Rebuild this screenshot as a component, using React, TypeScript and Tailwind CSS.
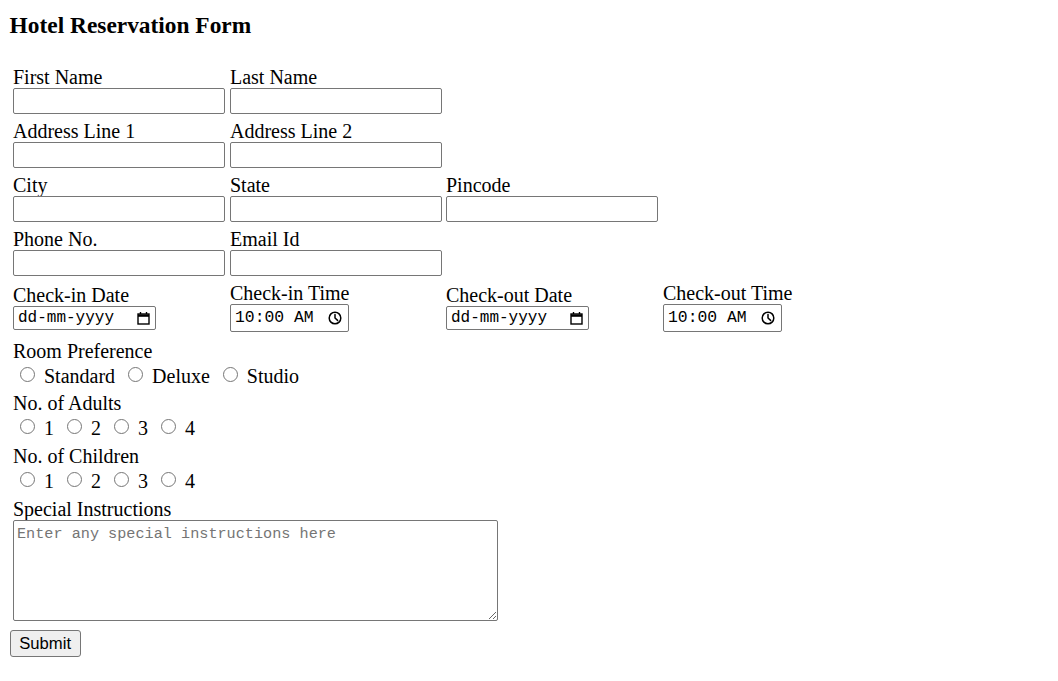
import { useState } from "react";

function CalendarIcon() {
  return (
    <svg width="13" height="13" viewBox="0 0 13 13" fill="none" stroke="black">
      <rect x="1" y="2" width="11" height="10" strokeWidth="1.4" />
      <line x1="1" y1="3.6" x2="12" y2="3.6" strokeWidth="2.4" />
      <line x1="3.5" y1="0" x2="3.5" y2="2" strokeWidth="1.4" />
      <line x1="9.5" y1="0" x2="9.5" y2="2" strokeWidth="1.4" />
    </svg>
  );
}

function ClockIcon() {
  return (
    <svg width="14" height="14" viewBox="0 0 14 14" fill="none" stroke="black" strokeWidth="1.5">
      <circle cx="7" cy="7" r="5.8" />
      <path d="M7 3.6V7l2.6 2.4" strokeLinecap="round" />
    </svg>
  );
}

function TextField({ label }: { label: string }) {
  return (
    <div className="flex flex-col">
      <label className="text-[20px] leading-[22px]">{label}</label>
      <input
        type="text"
        className="w-[212px] h-[26px] border border-[#767676] rounded-[2px] bg-white px-[2px] outline-none"
      />
    </div>
  );
}

function DateField({ label }: { label: string }) {
  return (
    <div className="flex flex-col self-center">
      <label className="text-[20px] leading-[22px]">{label}</label>
      <div className="w-[143px] h-[24px] border border-[#767676] rounded-[2px] flex items-center justify-between pl-[4px] pr-[5px] font-['Liberation_Mono',monospace] text-[16px]">
        <span>dd-mm-yyyy</span>
        <CalendarIcon />
      </div>
    </div>
  );
}

function TimeField({ label }: { label: string }) {
  return (
    <div className="flex flex-col self-center">
      <label className="text-[20px] leading-[22px]">{label}</label>
      <div className="w-[119px] h-[28px] border border-[#767676] rounded-[2px] flex items-center justify-between pl-[4px] pr-[6px] font-['Liberation_Mono',monospace] text-[16.4px]">
        <span>10:00 AM</span>
        <ClockIcon />
      </div>
    </div>
  );
}

function RadioGroup({
  label,
  name,
  options,
  className,
}: {
  label: string;
  name: string;
  options: string[];
  className?: string;
}) {
  const [picked, setPicked] = useState("");
  return (
    <div className={`flex flex-col ${className ?? ""}`}>
      <span className="text-[20px] leading-[22px]">{label}</span>
      <div className="h-[24px] flex items-center gap-[13px] pl-[7px]">
        {options.map((o) => (
          <label key={o} className="flex items-center text-[20px] leading-[22px] pt-[3px]">
            <input
              type="radio"
              name={name}
              checked={picked === o}
              onChange={() => setPicked(o)}
              className="appearance-none w-[15px] h-[15px] -mt-[3px] rounded-full border border-[#767676] bg-white mr-[9px] checked:border-[5px] checked:border-[#0075ff]"
            />
            {o}
          </label>
        ))}
      </div>
    </div>
  );
}

export default function App() {
  return (
    <div className="min-h-screen bg-white text-black px-[9.6px] font-['Liberation_Serif',serif]">
      <h3 className="pt-[12px] text-[23.4px] leading-[26px] font-bold">Hotel Reservation Form</h3>

      <form className="pl-[3.4px] pt-[28px]" onSubmit={(e) => e.preventDefault()}>
        <div className="grid grid-cols-[217px_216px_217px_auto] gap-y-[6px]">
          <TextField label="First Name" />
          <TextField label="Last Name" />
          <div />
          <div />

          <TextField label="Address Line 1" />
          <TextField label="Address Line 2" />
          <div />
          <div />

          <TextField label="City" />
          <TextField label="State" />
          <TextField label="Pincode" />
          <div />

          <TextField label="Phone No." />
          <TextField label="Email Id" />
          <div />
          <div />

          <DateField label="Check-in Date" />
          <TimeField label="Check-in Time" />
          <DateField label="Check-out Date" />
          <TimeField label="Check-out Time" />
        </div>

        <RadioGroup
          className="mt-[8px]"
          label="Room Preference"
          name="room"
          options={["Standard", "Deluxe", "Studio"]}
        />
        <RadioGroup className="mt-[6px]" label="No. of Adults" name="adults" options={["1", "2", "3", "4"]} />
        <RadioGroup className="mt-[7px]" label="No. of Children" name="children" options={["1", "2", "3", "4"]} />

        <div className="flex flex-col mt-[7px]">
          <label className="text-[20px] leading-[22px]">Special Instructions</label>
          <textarea
            placeholder="Enter any special instructions here"
            className="w-[485px] h-[101px] border border-[#767676] rounded-[2px] px-[3px] pt-[4px] font-['Liberation_Mono',monospace] text-[15.2px] leading-[18px] placeholder:text-[#757575] outline-none resize-y"
          />
        </div>
      </form>

      <button
        type="submit"
        className="mt-[9px] w-[71px] h-[27px] bg-[#efefef] border border-[#767676] rounded-[3px] font-['Liberation_Sans',sans-serif] text-[16.67px]"
      >
        Submit
      </button>
    </div>
  );
}
